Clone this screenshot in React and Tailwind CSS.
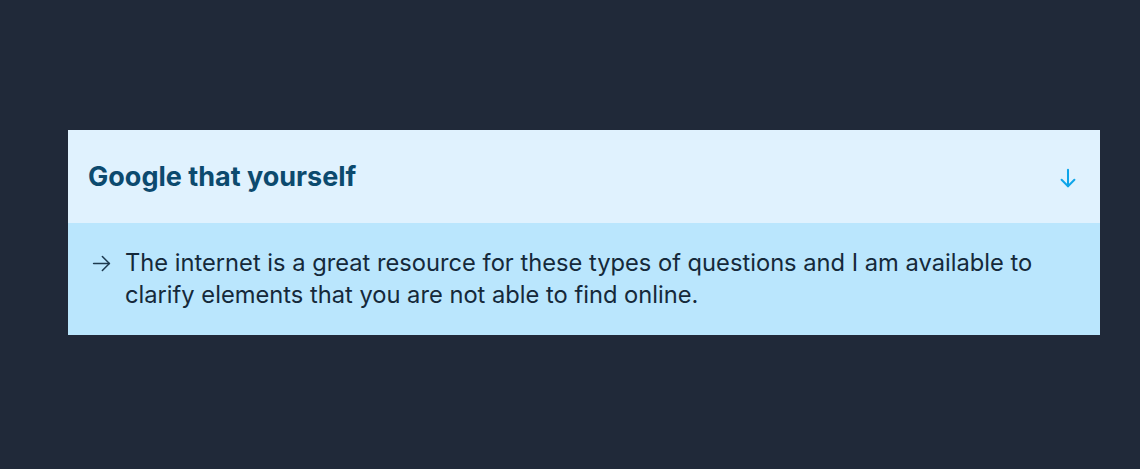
import React, { useState } from "react";

const App = () => {
  const [open, setOpen] = useState(true);

  return (
    <div
      className="min-h-screen bg-[#202939] pl-[68px] pr-[40px] pt-[130px]"
      style={{ fontFamily: "Inter, 'Noto Sans', sans-serif" }}
    >
      <div className="w-full">
        <button
          className="flex h-[93px] w-full items-center justify-between bg-[#e0f2fe] pl-[20px] pr-[21px] pt-[2px] text-left"
          onClick={() => setOpen(!open)}
        >
          <span className="text-[27px] font-bold text-[#0c4a6e]">
            Google that yourself
          </span>
          <svg
            width="22"
            height="22"
            viewBox="0 0 24 24"
            fill="none"
            stroke="#0ea5e9"
            strokeWidth="2.2"
            strokeLinecap="round"
            strokeLinejoin="round"
          >
            <path d="M12 3v18" />
            <path d="M5 14l7 7 7-7" />
          </svg>
        </button>

        {open && (
          <div className="flex gap-[13px] bg-[#bae6fd] pb-[24px] pl-[23px] pr-[30px] pt-[24px]">
            <svg
              className="mt-[6px] shrink-0"
              width="21"
              height="21"
              viewBox="0 0 24 24"
              fill="none"
              stroke="#1e3a4f"
              strokeWidth="1.8"
              strokeLinecap="round"
              strokeLinejoin="round"
            >
              <path d="M3 12h18" />
              <path d="M13 4l8 8-8 8" />
            </svg>
            <p className="text-[23.7px] leading-[32px] text-[#15293a]">
              The internet is a great resource for these types of questions and I am available to clarify elements that you are not able to find online.
            </p>
          </div>
        )}
      </div>
    </div>
  );
};

export default App;
